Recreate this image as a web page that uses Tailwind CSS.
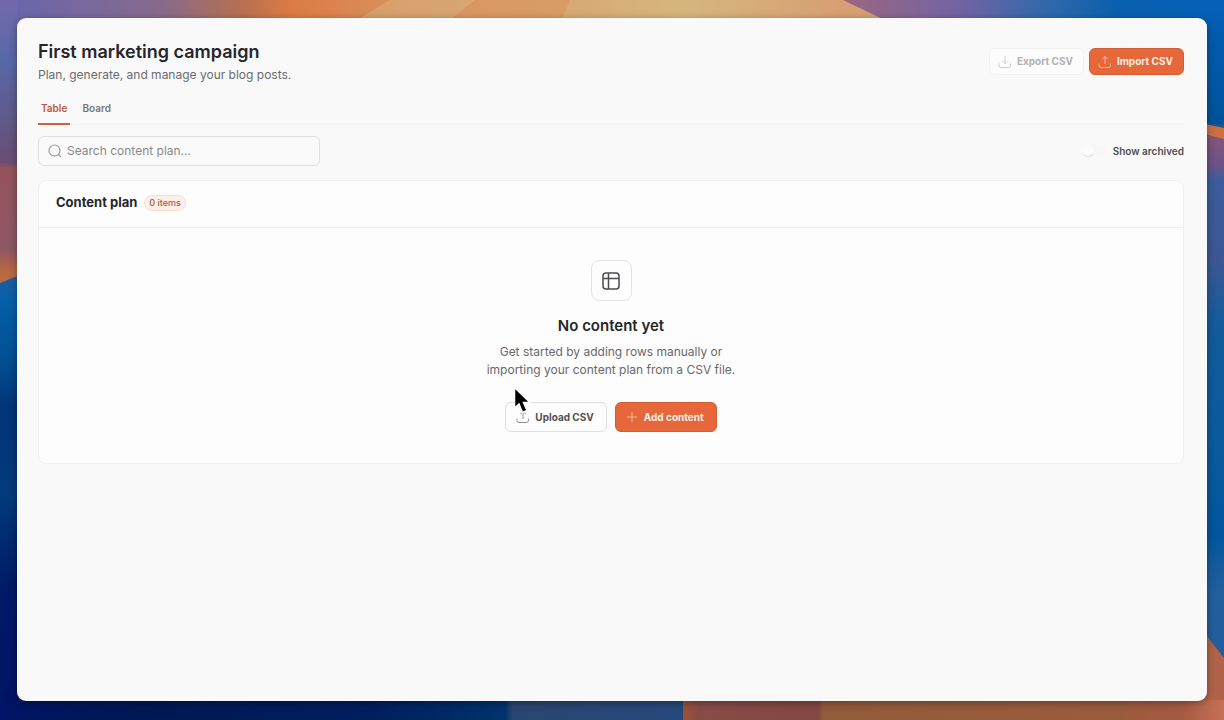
<!DOCTYPE html>
<html lang="en">
<head>
    <meta charset="UTF-8">
    <meta name="viewport" content="width=device-width, initial-scale=1.0">
    <script src="https://cdn.jsdelivr.net/npm/@tailwindcss/browser@4"></script>
    <title>First marketing campaign</title>
</head>
<body class="relative isolate flex min-h-screen bg-[#02206a] px-[17px] pt-[18px] pb-[19px] font-['Inter',sans-serif] text-[#26262a]">

    <!-- Wallpaper -->
    <svg class="absolute inset-0 -z-10 h-full w-full" viewBox="0 0 1224 720" preserveAspectRatio="none" aria-hidden="true">
        <defs>
            <linearGradient id="top" x1="0" x2="1" y1="0" y2="0">
                <stop offset="0" stop-color="#6a66ac" />
                <stop offset="0.12" stop-color="#876a8c" />
                <stop offset="0.19" stop-color="#b8704f" />
                <stop offset="0.23" stop-color="#dc7b45" />
                <stop offset="0.33" stop-color="#d9935f" />
                <stop offset="0.46" stop-color="#d8a973" />
                <stop offset="0.56" stop-color="#d6b67e" />
                <stop offset="0.69" stop-color="#d7a072" />
                <stop offset="0.74" stop-color="#d7a072" />
            </linearGradient>
            <linearGradient id="topBlue" x1="0" x2="1" y1="0" y2="0">
                <stop offset="0" stop-color="#9c6780" />
                <stop offset="0.32" stop-color="#7263a4" />
                <stop offset="0.55" stop-color="#3269ab" />
                <stop offset="0.75" stop-color="#0a60ae" />
                <stop offset="1" stop-color="#0560b8" />
            </linearGradient>
            <linearGradient id="left" x1="0" x2="0" y1="0" y2="1">
                <stop offset="0" stop-color="#7468ac" />
                <stop offset="0.2" stop-color="#5868a8" />
                <stop offset="0.4" stop-color="#5f5a8c" />
                <stop offset="0.56" stop-color="#6a4d74" />
                <stop offset="0.58" stop-color="#95535b" />
                <stop offset="0.86" stop-color="#8d5765" />
                <stop offset="0.93" stop-color="#b76843" />
                <stop offset="1" stop-color="#c06c3e" />
            </linearGradient>
            <linearGradient id="leftBlue" x1="0" x2="0" y1="0" y2="1">
                <stop offset="0" stop-color="#2a5c9c" />
                <stop offset="0.06" stop-color="#0660a8" />
                <stop offset="0.2" stop-color="#024f93" />
                <stop offset="0.3" stop-color="#033576" />
                <stop offset="0.5" stop-color="#023a7c" />
                <stop offset="0.7" stop-color="#001a66" />
                <stop offset="1" stop-color="#001466" />
            </linearGradient>
            <linearGradient id="right" x1="0" x2="0" y1="0" y2="1">
                <stop offset="0" stop-color="#0560b8" />
                <stop offset="0.17" stop-color="#01529a" />
                <stop offset="0.19" stop-color="#84547a" />
                <stop offset="0.23" stop-color="#6c5388" />
                <stop offset="0.25" stop-color="#3c5c9c" />
                <stop offset="0.36" stop-color="#3d5794" />
                <stop offset="0.45" stop-color="#135b9b" />
                <stop offset="0.62" stop-color="#0a5b9e" />
                <stop offset="0.74" stop-color="#02569c" />
                <stop offset="0.82" stop-color="#215f9d" />
                <stop offset="1" stop-color="#28599a" />
            </linearGradient>
            <linearGradient id="bottomBlue" x1="0" x2="1" y1="0" y2="0">
                <stop offset="0" stop-color="#001466" />
                <stop offset="0.2" stop-color="#001852" />
                <stop offset="0.55" stop-color="#001f5e" />
                <stop offset="0.74" stop-color="#00336c" />
                <stop offset="0.75" stop-color="#2a456f" />
                <stop offset="1" stop-color="#26497c" />
            </linearGradient>
            <linearGradient id="bottomOrange" x1="0" x2="1" y1="0" y2="0">
                <stop offset="0" stop-color="#9c5335" />
                <stop offset="0.03" stop-color="#864c48" />
                <stop offset="0.25" stop-color="#824843" />
                <stop offset="0.26" stop-color="#925b3b" />
                <stop offset="0.8" stop-color="#9a5c3d" />
                <stop offset="0.92" stop-color="#a55a42" />
                <stop offset="1" stop-color="#c57156" />
            </linearGradient>
        </defs>
        <rect x="1190" width="34" height="720" fill="url(#right)" />
        <rect width="60" height="290" fill="url(#left)" />
        <path d="M0 283 30 271V720H0Z" fill="url(#leftBlue)" />
        <rect x="17" width="1190" height="60" fill="url(#top)" />
        <path d="M390 0H475L445 24H350Z" fill="#d7ae78" fill-opacity="0.6" />
        <path d="M475 0 445 24H560L570 0Z" fill="#db9560" fill-opacity="0.6" />
        <path d="M843 0H1207V24H893Z" fill="url(#topBlue)" />
        <path d="M1200 123 1224 128V139L1200 133Z" fill="#cc7040" />
        <rect y="690" width="683" height="30" fill="url(#bottomBlue)" />
        <rect x="683" y="690" width="541" height="30" fill="url(#bottomOrange)" />
        <path d="M1200 627 1224 658V700H1200Z" fill="#b06349" />
    </svg>

    <!-- App window -->
    <main class="relative flex-1 rounded-[9px] bg-[#f9f9f9] pt-5 pr-[23px] pl-[21px] shadow-[0_2px_8px_rgba(0,0,0,0.35)]">

        <!-- Header -->
        <header class="flex items-center justify-between">
            <div>
                <h1 class="text-lg leading-[27px] font-semibold">First marketing campaign</h1>
                <p class="text-xs leading-5 text-[#6b6b70]">Plan, generate, and manage your blog posts.</p>
            </div>
            <div class="flex gap-[5px]">
                <button type="button" disabled class="flex h-[27px] items-center gap-1 rounded-md border border-[#f2f2f2] bg-[#fcfcfc] pr-[10px] pl-[7px] text-[10px] font-bold text-[#b1b1b3]">
                    <svg class="size-4 text-[#cfcfd0]" viewBox="0 0 16 16" fill="none" stroke="currentColor" stroke-linecap="round" stroke-linejoin="round" aria-hidden="true">
                        <path d="M2 10v1.500a2 2 0 0 0 2 2h7.500a2 2 0 0 0 2-2V10M8 2.500v7M5.500 7.200 8 9.700l2.500-2.500" />
                    </svg>
                    Export CSV
                </button>
                <button type="button" class="flex h-[27px] items-center gap-1 rounded-md border border-[#d45c33] bg-[#e5673a] pr-[10px] pl-[7px] text-[10px] font-bold text-[#fdf0eb]">
                    <svg class="size-4 text-[#f6b79f]" viewBox="0 0 16 16" fill="none" stroke="currentColor" stroke-linecap="round" stroke-linejoin="round" aria-hidden="true">
                        <path d="M2 10v1.500a2 2 0 0 0 2 2h7.500a2 2 0 0 0 2-2V10M8 9.500v-7M5.500 5 8 2.500 10.500 5" />
                    </svg>
                    Import CSV
                </button>
            </div>
        </header>

        <!-- Tabs -->
        <nav class="mt-3 flex gap-2 border-b border-[#f0f0f0] text-[10px] leading-4 font-semibold">
            <a href="#" class="-mb-px border-b-2 border-[#d2603c] px-[3px] pt-[3px] pb-[7px] text-[#c4553a]">Table</a>
            <a href="#" class="px-1 pt-[3px] pb-[7px] text-[#77777a]">Board</a>
        </nav>

        <!-- Search and filter -->
        <div class="mt-[11px] flex items-center justify-between">
            <label class="flex h-[30px] w-[282px] items-center gap-1 rounded-md border border-[#dfdfdf] bg-[#fafafa] px-2">
                <svg class="size-4 shrink-0 text-[#9c9c9f]" viewBox="0 0 16 16" fill="none" stroke="currentColor" stroke-width="1.200" stroke-linecap="round" aria-hidden="true">
                    <circle cx="7.500" cy="7.500" r="5.500" />
                    <path d="m11.500 11.500 2 2" />
                </svg>
                <input type="text" placeholder="Search content plan..." aria-label="Search content plan" class="min-w-0 flex-1 bg-transparent text-xs outline-none placeholder:text-[#8a8a8d]">
            </label>
            <label class="flex items-center gap-[7px] text-[10px] font-semibold text-[#4e4e52]">
                <input type="checkbox" role="switch" class="h-3 w-6 appearance-none rounded-full bg-[#f7f7f7] before:block before:size-3 before:rounded-full before:border-b before:border-[#dcdcdc] before:bg-[#fbfbfb]">
                Show archived
            </label>
        </div>

        <!-- Content plan card -->
        <section class="mt-[14px] rounded-lg border border-[#f0f0f0] bg-[#fdfdfd]">
            <div class="flex h-[47px] items-center gap-[7px] border-b border-[#ececec] px-[17px] pb-[2px]">
                <h2 class="text-[13px] font-bold">Content plan</h2>
                <span class="rounded-full border border-[#f8ddd2] bg-[#fdf0ea] px-1 text-[9px] leading-[14px] font-medium text-[#b4563d]">0 items</span>
            </div>

            <!-- Empty state -->
            <div class="flex flex-col items-center pt-8 pb-[31px]">
                <div class="flex size-[41px] items-center justify-center rounded-lg border border-[#e4e4e4]">
                    <svg class="size-5 text-[#4b4b4f]" viewBox="0 0 20 20" fill="none" stroke="currentColor" stroke-width="1.500" aria-hidden="true">
                        <rect x="2" y="2" width="16" height="16" rx="3" />
                        <path d="M2 7.500h16M7.500 2v16" />
                    </svg>
                </div>
                <h3 class="mt-[15px] text-[15px] leading-5 font-semibold">No content yet</h3>
                <p class="mt-[7px] text-center text-xs leading-[18px] text-[#68686c]">
                    Get started by adding rows manually or<br>
                    importing your content plan from a CSV file.
                </p>
                <div class="mt-[23px] flex gap-2">
                    <div class="relative">
                        <button type="button" class="flex h-[30px] items-center gap-1 rounded-md border border-[#dedede] bg-[#fdfdfd] pr-3 pl-[9px] text-[10px] font-bold text-[#515155]">
                            <svg class="size-4 text-[#8e8e91]" viewBox="0 0 16 16" fill="none" stroke="currentColor" stroke-linecap="round" stroke-linejoin="round" aria-hidden="true">
                                <path d="M2 10v1.500a2 2 0 0 0 2 2h7.500a2 2 0 0 0 2-2V10M8 9.500v-7M5.500 5 8 2.500 10.500 5" />
                            </svg>
                            Upload CSV
                        </button>
                        <!-- Pointer -->
                        <svg class="absolute -top-4 left-2 h-[29px] w-5" viewBox="0 0 20 29" aria-hidden="true">
                            <path d="M1.500 1.500V22l4.500-4 3.500 8.500 4.500-2-3.500-8H17Z" fill="#000" stroke="#fff" stroke-width="1.500" />
                        </svg>
                    </div>
                    <button type="button" class="flex h-[30px] items-center gap-[5px] rounded-md border border-[#d45c33] bg-[#e5673a] pr-3 pl-[9px] text-[10px] font-bold text-[#fdf0eb]">
                        <svg class="size-[14px] text-[#f6b79f]" viewBox="0 0 14 14" fill="none" stroke="currentColor" stroke-linecap="round" aria-hidden="true">
                            <path d="M7 2.500v9M2.500 7h9" />
                        </svg>
                        Add content
                    </button>
                </div>
            </div>
        </section>
    </main>

</body>
</html>
